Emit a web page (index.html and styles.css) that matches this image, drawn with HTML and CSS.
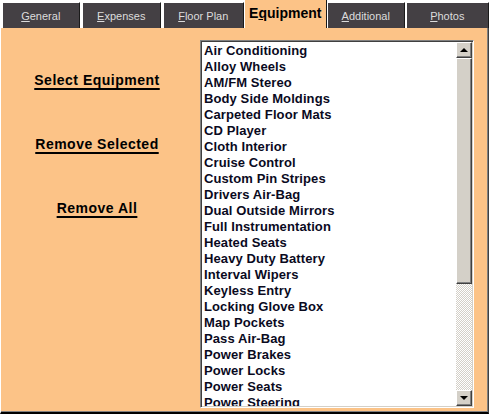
FILE: index.html
```html
<!DOCTYPE html>
<html lang="en">
<head>
    <meta charset="UTF-8">
    <title>Vehicle - Equipment</title>
    <link rel="stylesheet" href="styles.css">
</head>
<body>
    <div class="window">
        <div class="tabs">
            <div class="tab tab-general"><span class="key">G</span>eneral</div>
            <div class="tab tab-expenses"><span class="key">E</span>xpenses</div>
            <div class="tab tab-floor"><span class="key">F</span>loor Plan</div>
            <div class="tab tab-equipment active">E<span class="key">q</span>uipment</div>
            <div class="tab tab-additional"><span class="key">A</span>dditional</div>
            <div class="tab tab-photos"><span class="key">P</span>hotos</div>
        </div>
        <div class="panel">
            <div class="actions">
                <a class="action">Select Equipment</a>
                <a class="action">Remove Selected</a>
                <a class="action">Remove All</a>
            </div>
            <div class="listbox">
                <div class="items" id="items"></div>
                <div class="scrollbar">
                    <div class="sb-btn"><span class="arrow up"></span></div>
                    <div class="sb-thumb"></div>
                    <div class="sb-track"></div>
                    <div class="sb-btn"><span class="arrow down"></span></div>
                </div>
            </div>
        </div>
    </div>
    <script>
        const equipment = [
            "Air Conditioning", "Alloy Wheels", "AM/FM Stereo", "Body Side Moldings",
            "Carpeted Floor Mats", "CD Player", "Cloth Interior", "Cruise Control",
            "Custom Pin Stripes", "Drivers Air-Bag", "Dual Outside Mirrors",
            "Full Instrumentation", "Heated Seats", "Heavy Duty Battery", "Interval Wipers",
            "Keyless Entry", "Locking Glove Box", "Map Pockets", "Pass Air-Bag",
            "Power Brakes", "Power Locks", "Power Seats", "Power Steering", "Power Windows"
        ];
        const list = document.getElementById('items');
        equipment.forEach(name => {
            const row = document.createElement('div');
            row.className = 'item';
            row.textContent = name;
            list.appendChild(row);
        });
    </script>
</body>
</html>
```

FILE: styles.css
```css
body {
    margin: 0;
    padding: 0;
    background-color: #ffffff;
    font-family: "Liberation Sans", Arial, sans-serif;
}

.window {
    width: 489px;
    height: 414px;
    display: flex;
    flex-direction: column;
    overflow: hidden;
}

/* tab strip */
.tabs {
    height: 28px;
    display: flex;
    align-items: flex-end;
    background-color: #ffffff;
}

.tab {
    box-sizing: border-box;
    height: 26px;
    margin-right: 2px;
    background-color: #444044;
    color: #dcdcdc;
    font-size: 11px;
    border-top: 1px solid #ffffff;
    border-left: 1px solid #ffffff;
    border-right: 1px solid #1a1a1a;
    display: flex;
    justify-content: center;
    align-items: center;
}

.key {
    text-decoration: underline;
}

.tab-general { width: 78px; margin-left: 2px; }
.tab-expenses { width: 80px; }
.tab-floor { width: 81px; margin-right: 0; }
.tab-equipment { width: 84px; margin-right: 0; }
.tab-additional { width: 78px; margin-right: 1px; }
.tab-photos { width: 84px; margin-right: 0; }

.tab.active {
    height: 28px;
    background-color: #fcc387;
    color: #000000;
    font-size: 14px;
    font-weight: bold;
    border-top: none;
    padding-bottom: 2px;
}

/* page body */
.panel {
    flex: 1;
    display: flex;
    background-color: #fcc387;
    border-left: 1px solid #ffffff;
    border-right: 1px solid #404040;
    border-bottom: 2px solid;
    border-bottom-color: #000000;
    box-shadow: inset 0 -1px 0 #808080, inset -1px 0 0 #808080;
}

.actions {
    width: 192px;
    padding-top: 44px;
    display: flex;
    flex-direction: column;
    align-items: center;
    gap: 48px;
}

.action {
    font-size: 14px;
    font-weight: bold;
    letter-spacing: 0.5px;
    line-height: 16px;
    color: #000000;
    text-decoration: underline;
    text-decoration-thickness: 2px;
    text-underline-offset: 3px;
    cursor: pointer;
}

.listbox {
    box-sizing: border-box;
    width: 274px;
    height: 368px;
    margin-top: 12px;
    margin-left: 7px;
    display: flex;
    background-color: #ffffff;
    border: 1px solid;
    border-color: #808080 #ffffff #ffffff #808080;
    box-shadow: inset 1px 1px 0 #404040, inset -1px -1px 0 #d4d0c8;
    padding: 1px;
}

.items {
    flex: 1;
    overflow: hidden;
    padding-left: 2px;
    padding-top: 1px;
}

.item {
    height: 16px;
    line-height: 16px;
    font-size: 13px;
    font-weight: bold;
    letter-spacing: 0.1px;
    color: #0a0a1e;
    white-space: nowrap;
}

/* classic scroll bar */
.scrollbar {
    width: 16px;
    display: flex;
    flex-direction: column;
}

.sb-btn,
.sb-thumb {
    box-sizing: border-box;
    background-color: #d4d0c8;
    border: 1px solid;
    border-color: #ffffff #404040 #404040 #ffffff;
    box-shadow: inset -1px -1px 0 #808080;
}

.sb-btn {
    height: 16px;
    display: flex;
    justify-content: center;
    align-items: center;
}

.sb-thumb {
    height: 226px;
}

.sb-track {
    flex: 1;
    background: repeating-conic-gradient(#d4d0c8 0 25%, #ffffff 0 50%) 0 0 / 2px 2px;
}

.arrow {
    width: 0;
    height: 0;
    border-left: 4px solid transparent;
    border-right: 4px solid transparent;
}

.arrow.up {
    border-bottom: 4px solid #000000;
}

.arrow.down {
    border-top: 4px solid #000000;
}
```
